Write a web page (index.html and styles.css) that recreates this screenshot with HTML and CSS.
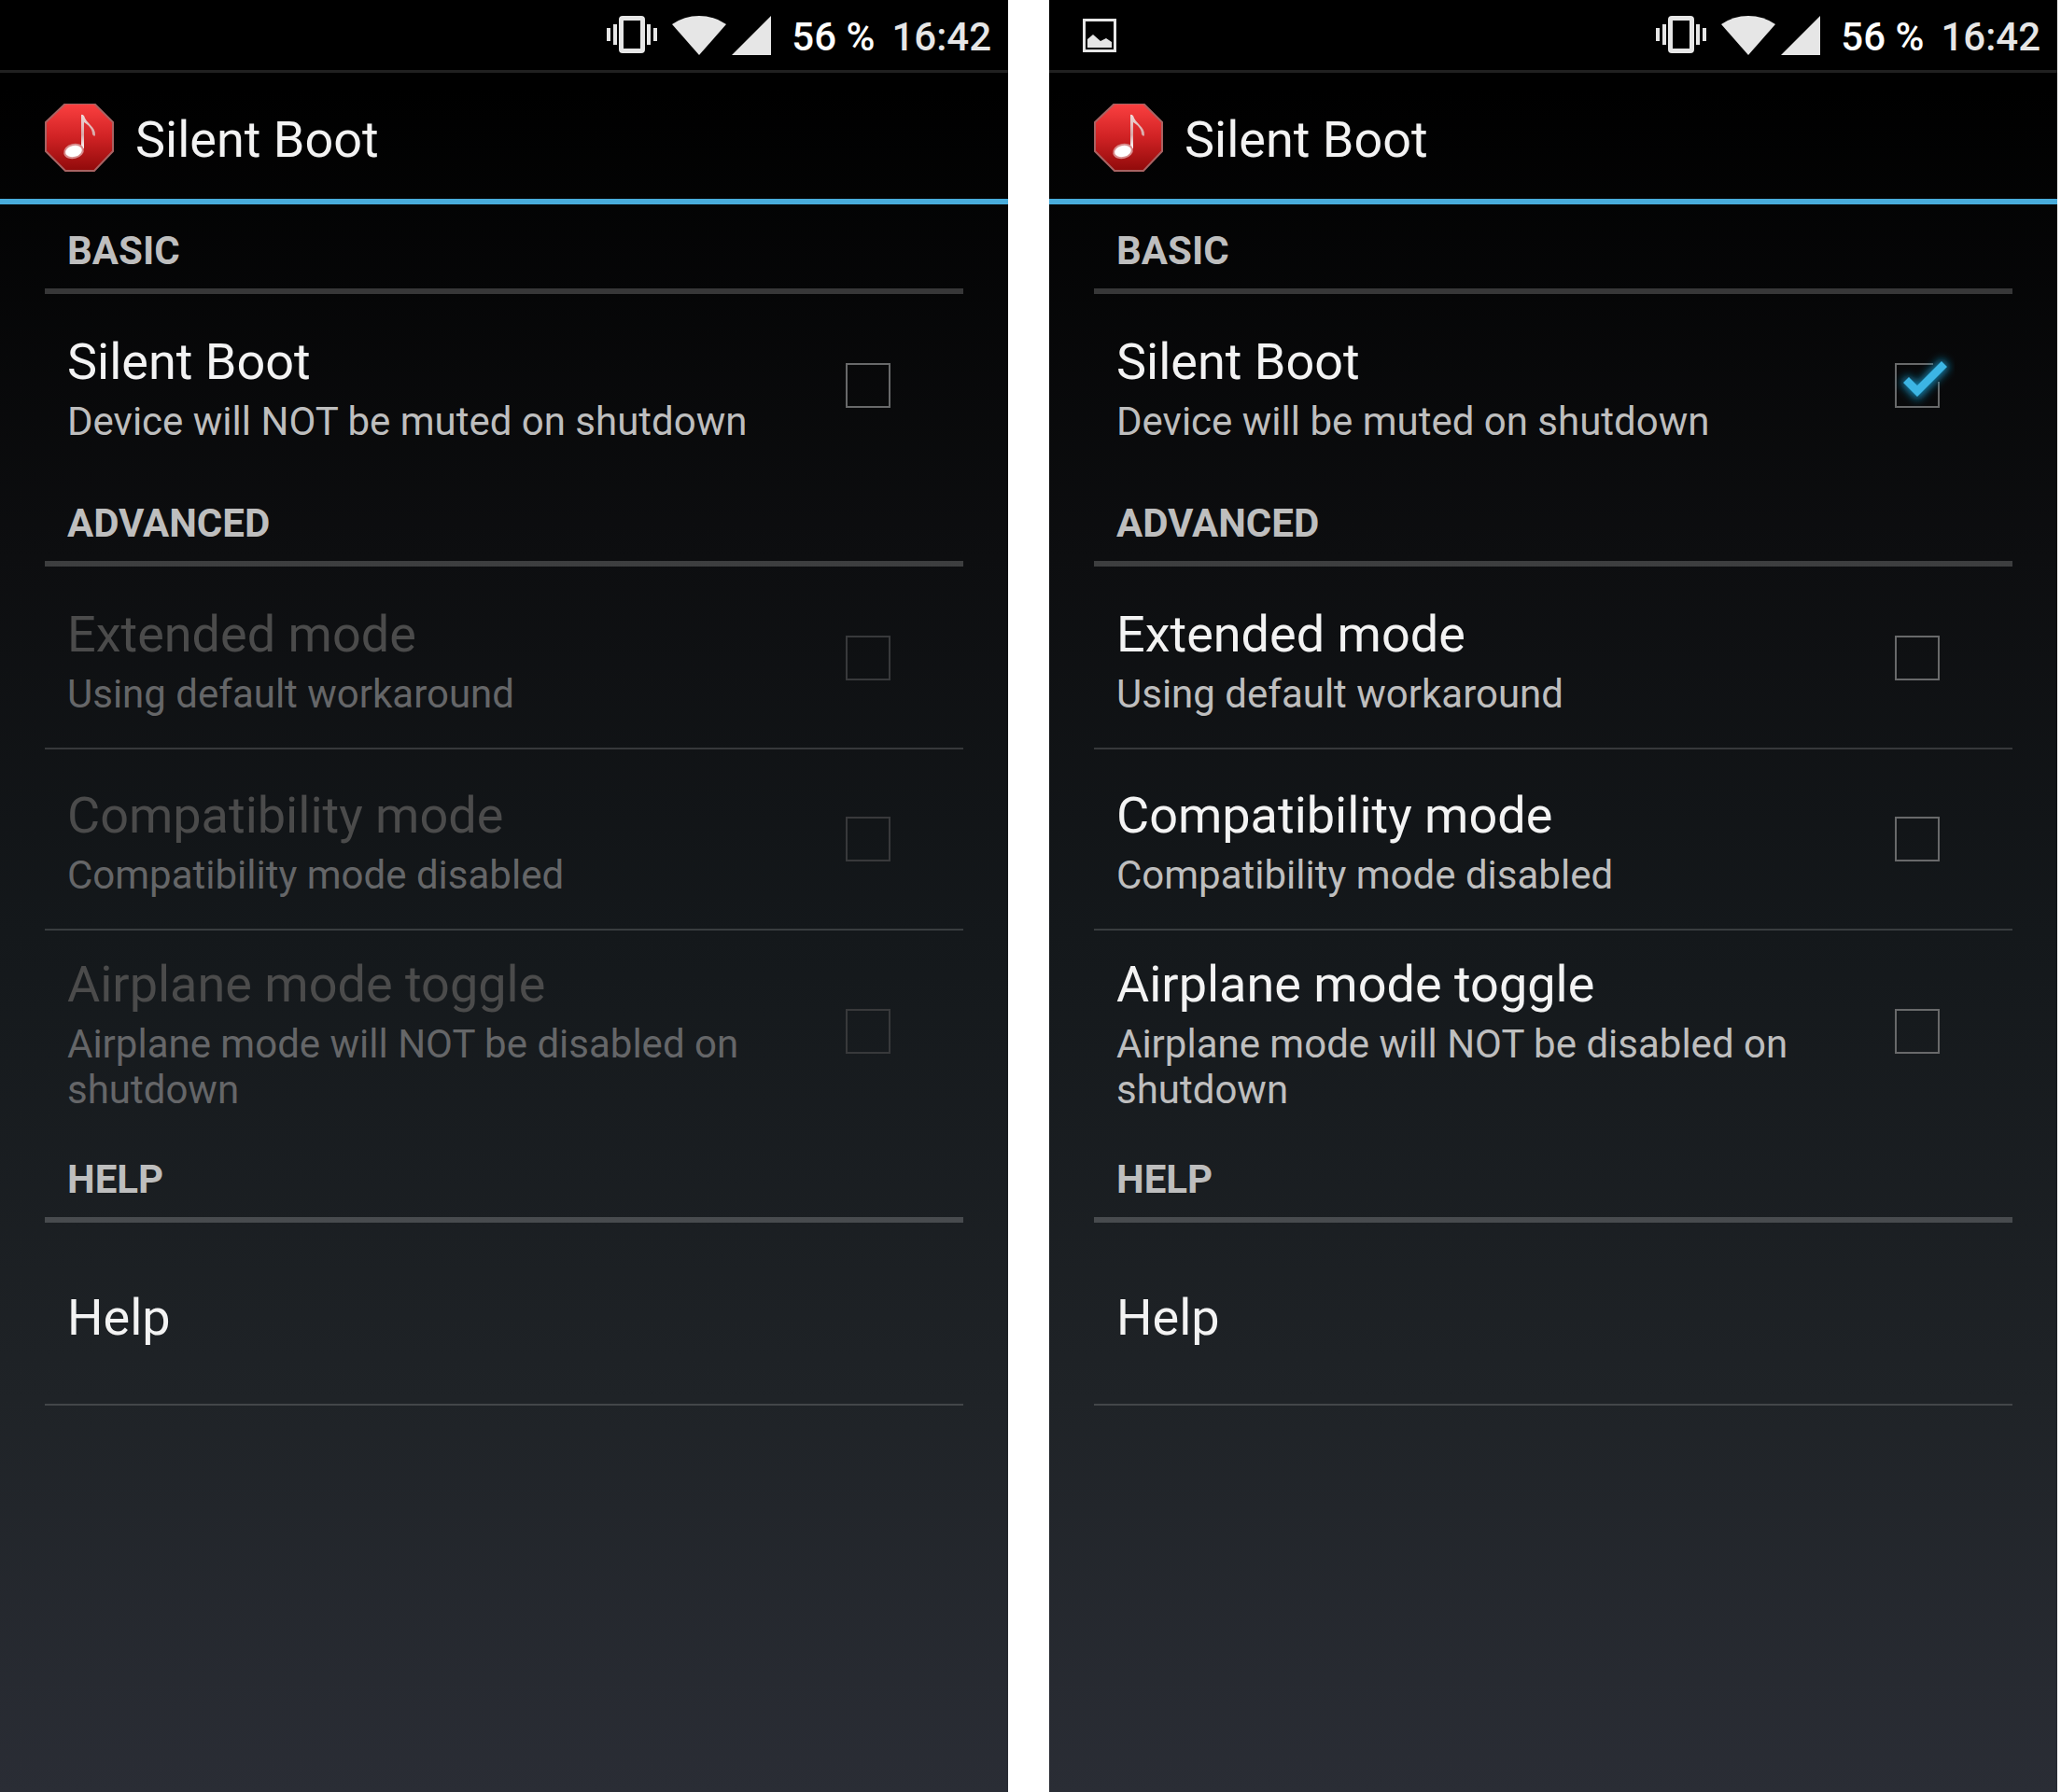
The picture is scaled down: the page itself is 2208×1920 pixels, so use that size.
FILE: index.html
```html
<!DOCTYPE html>
<html lang="en">

<head>
    <meta charset="UTF-8">
    <title>Silent Boot</title>
    <link rel="stylesheet" href="styles.css">
</head>

<body>
    <!-- icons -->
    <svg class="sprite" aria-hidden="true">
        <defs>
            <linearGradient id="red" x1="0" y1="0" x2="0" y2="1">
                <stop offset="0" stop-color="#fb4040"/>
                <stop offset=".5" stop-color="#d02224"/>
                <stop offset="1" stop-color="#900a0a"/>
            </linearGradient>
            <linearGradient id="silver" x1="0" y1="0" x2="0" y2="1">
                <stop offset="0" stop-color="#f0dcda"/>
                <stop offset=".6" stop-color="#d8a8a8"/>
                <stop offset="1" stop-color="#fff"/>
            </linearGradient>
            <symbol id="vibrate" viewBox="0 0 54 44">
                <path d="M0 14h4v14H0zM7 10h4v22H7zM43 10h4v22h-4zM50 14h4v14h-4z"/>
                <path fill-rule="evenodd" d="M17 1h20q4 0 4 4v32q0 4-4 4H17q-4 0-4-4V5q0-4 4-4zM18 6v30h18V6z"/>
            </symbol>
            <symbol id="wifi" viewBox="0 0 58 44">
                <path d="M0 10Q13 1 29 1T58 10L29 43z"/>
            </symbol>
            <symbol id="signal" viewBox="0 0 42 44">
                <path d="M42 1v42H0z"/>
            </symbol>
            <symbol id="picture" viewBox="0 0 36 36">
                <path fill-rule="evenodd" d="M0 0h36v36H0zM3 3v30h30V3z"/>
                <path d="M5 31v-9l6-5 8 7 6-3 6 4v6z"/>
            </symbol>
            <symbol id="logo" viewBox="0 0 74 76">
                <path d="M22 0h31l20 20v31L53 72H22L1 51V20z" fill="url(#red)" stroke="#a86262" stroke-width="2"/>
                <path d="M39 12q1-1 3 1c2 8 13 12 12 21q-1 2-3-1c0-6-4-10-9-13v28h-3z" fill="url(#silver)"/>
                <ellipse cx="31" cy="51" rx="10" ry="7" transform="rotate(-14 31 51)" fill="#fff" stroke="#d88c8c" stroke-width="2"/>
            </symbol>
            <filter id="glow" x="-50%" y="-50%" width="200%" height="200%">
                <feGaussianBlur stdDeviation="5"/>
            </filter>
            <symbol id="checked" viewBox="-16 -16 80 80">
                <path d="M41 1H1v46h46V20" fill="none" stroke="#68696a" stroke-width="2"/>
                <path d="M9 21l5-5 10 9L50 -2l6 6L24 37z" fill="#1587b4" stroke="#1587b4" stroke-width="4" filter="url(#glow)"/>
                <path d="M9 21l6-6 9 9L50 -2l6 6L24 36z" fill="#3cb5e4"/>
            </symbol>
        </defs>
    </svg>

    <div id="wrap">
        <section class="phone">
            <div class="status">
                <div class="icons">
                    <svg width="54" height="44"><use href="#vibrate"/></svg>
                    <svg width="58" height="44"><use href="#wifi"/></svg>
                    <svg width="42" height="44"><use href="#signal"/></svg>
                </div>
                <span class="battery">56 %</span>
                <span class="time">16:42</span>
            </div>
            <header class="bar">
                <svg width="74" height="76"><use href="#logo"/></svg>
                <h1>Silent Boot</h1>
            </header>
            <main class="list">
                <h2>BASIC</h2>
                <label class="item last">
                    <span class="text">
                        <span class="title">Silent Boot</span>
                        <span class="summary">Device will NOT be muted on shutdown</span>
                    </span>
                    <span class="box"><input type="checkbox"></span>
                </label>
                <h2>ADVANCED</h2>
                <label class="item off">
                    <span class="text">
                        <span class="title">Extended mode</span>
                        <span class="summary">Using default workaround</span>
                    </span>
                    <span class="box"><input type="checkbox" disabled></span>
                </label>
                <label class="item off">
                    <span class="text">
                        <span class="title">Compatibility mode</span>
                        <span class="summary">Compatibility mode disabled</span>
                    </span>
                    <span class="box"><input type="checkbox" disabled></span>
                </label>
                <label class="item off last">
                    <span class="text">
                        <span class="title">Airplane mode toggle</span>
                        <span class="summary">Airplane mode will NOT be disabled on shutdown</span>
                    </span>
                    <span class="box"><input type="checkbox" disabled></span>
                </label>
                <h2>HELP</h2>
                <a class="item" href="javascript:;">
                    <span class="text">
                        <span class="title">Help</span>
                    </span>
                </a>
            </main>
        </section>

        <section class="phone">
            <div class="status">
                <svg class="notice" width="36" height="36"><use href="#picture"/></svg>
                <div class="icons">
                    <svg width="54" height="44"><use href="#vibrate"/></svg>
                    <svg width="58" height="44"><use href="#wifi"/></svg>
                    <svg width="42" height="44"><use href="#signal"/></svg>
                </div>
                <span class="battery">56 %</span>
                <span class="time">16:42</span>
            </div>
            <header class="bar">
                <svg width="74" height="76"><use href="#logo"/></svg>
                <h1>Silent Boot</h1>
            </header>
            <main class="list">
                <h2>BASIC</h2>
                <label class="item last">
                    <span class="text">
                        <span class="title">Silent Boot</span>
                        <span class="summary">Device will be muted on shutdown</span>
                    </span>
                    <span class="box">
                        <input type="checkbox" checked>
                        <svg class="tick" width="80" height="80"><use href="#checked"/></svg>
                    </span>
                </label>
                <h2>ADVANCED</h2>
                <label class="item">
                    <span class="text">
                        <span class="title">Extended mode</span>
                        <span class="summary">Using default workaround</span>
                    </span>
                    <span class="box"><input type="checkbox"></span>
                </label>
                <label class="item">
                    <span class="text">
                        <span class="title">Compatibility mode</span>
                        <span class="summary">Compatibility mode disabled</span>
                    </span>
                    <span class="box"><input type="checkbox"></span>
                </label>
                <label class="item last">
                    <span class="text">
                        <span class="title">Airplane mode toggle</span>
                        <span class="summary">Airplane mode will NOT be disabled on shutdown</span>
                    </span>
                    <span class="box"><input type="checkbox"></span>
                </label>
                <h2>HELP</h2>
                <a class="item" href="javascript:;">
                    <span class="text">
                        <span class="title">Help</span>
                    </span>
                </a>
            </main>
        </section>
    </div>
</body>

</html>
```
FILE: styles.css
```css
* {
    box-sizing: border-box;
}

body {
    margin: 0;
    background: #fff;
    font-family: Roboto, "Liberation Sans", sans-serif;
}

h1,
h2 {
    margin: 0;
}

a {
    text-decoration: none;
}

svg {
    display: block;
    flex: none;
}

.sprite {
    position: absolute;
    width: 0;
    height: 0;
}

#wrap {
    display: flex;
    gap: 44px;
    min-height: 100vh;
    padding-right: 4px;
}

.phone {
    flex: 1;
    min-width: 0;
    background: linear-gradient(#000 0%, #000 5%, #0d0e10 31%, #14181b 52%, #1f2327 78%, #2a2d35 100%);
}

/* status bar */
.status {
    display: flex;
    align-items: center;
    justify-content: flex-end;
    height: 78px;
    padding: 0 18px 0 36px;
    border-bottom: 3px solid #202020;
    background: #000;
    color: #e6e6e6;
    fill: #e6e6e6;
    font-size: 42px;
    font-weight: 500;
    line-height: 49px;
}

.notice {
    margin-right: auto;
}

.icons {
    display: flex;
    gap: 16px;
}

.icons svg:last-child {
    margin-left: -10px;
}

.battery {
    margin: 4px 18px 0 22px;
    color: #fff;
}

.time {
    margin-top: 4px;
}

/* action bar */
.bar {
    display: flex;
    align-items: center;
    gap: 23px;
    height: 141px;
    padding: 8px 48px 0;
    border-bottom: 6px solid #48acdb;
}

.bar svg {
    margin-bottom: 2px;
}

h1 {
    color: #f3f3f3;
    font-size: 54px;
    font-weight: 400;
    line-height: 63px;
}

/* preferences */
.list {
    padding: 0 48px;
}

h2 {
    height: 96px;
    margin-bottom: 2px;
    padding: 25px 24px 0;
    border-bottom: 6px solid rgba(255, 255, 255, .2);
    color: #bebebe;
    font-size: 42px;
    font-weight: 700;
    line-height: 49px;
}

.item {
    display: flex;
    align-items: center;
    min-height: 194px;
    padding: 0 24px;
    border-bottom: 2px solid rgba(255, 255, 255, .16);
}

.last {
    border-bottom-color: transparent;
}

.text {
    flex: 1;
    min-width: 0;
    padding: 26px 0 20px;
}

.title,
.summary {
    display: block;
}

.title {
    color: #f3f3f3;
    font-size: 54px;
    line-height: 63px;
}

.summary {
    margin-top: 8px;
    color: #bebebe;
    font-size: 42px;
    line-height: 49px;
}

.off .title {
    color: #4b4b4b;
}

.off .summary {
    color: #656668;
}

.box {
    position: relative;
    flex: none;
    margin: 0 54px 0 24px;
}

.box input {
    display: block;
    appearance: none;
    width: 48px;
    height: 48px;
    margin: 0;
    border: 2px solid #68696a;
}

.box input:disabled {
    border-color: #38393b;
}

.box input:checked {
    border-color: transparent;
}

.tick {
    position: absolute;
    top: -16px;
    left: -16px;
}
```
